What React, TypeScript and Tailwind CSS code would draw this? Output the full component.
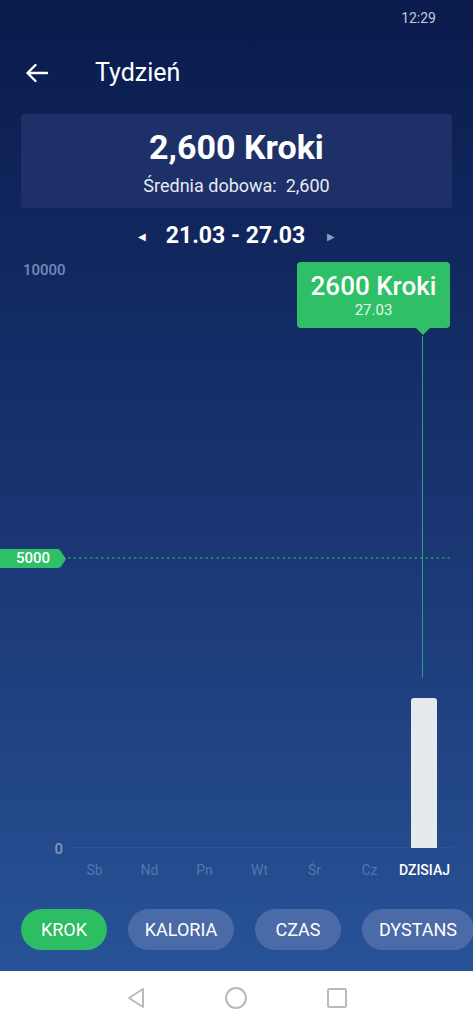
import React from "react";

const days = ["Sb", "Nd", "Pn", "Wt", "Śr", "Cz", "DZISIAJ"];
const values = [0, 0, 0, 0, 0, 0, 2600];
const tabs = ["KALORIA", "CZAS", "DYSTANS"];

const PLOT_H = 578;

export default function App() {
  return (
    <div
      className="flex h-[1024px] w-[473px] flex-col overflow-hidden bg-gradient-to-b from-[#0a1b4d] via-[#193571] to-[#2a569c] text-white"
      style={{ fontFamily: "Roboto, 'Noto Sans', sans-serif" }}
    >
      {/* status bar */}
      <div className="flex h-[36px] items-center justify-end pr-[37px] text-[14px] text-[#c3cadb]">12:29</div>

      {/* header */}
      <div className="flex h-[74px] items-center">
        <svg width="24" height="20" viewBox="0 0 24 20" className="ml-[25px]" fill="none" stroke="white" strokeWidth="2.4" strokeLinecap="round" strokeLinejoin="round">
          <path d="M22 10H2.5M10.5 2L2.5 10l8 8" />
        </svg>
        <span className="ml-[46px] text-[25px]">Tydzień</span>
      </div>

      {/* summary card */}
      <div className="mx-[21px] mt-[4px] flex h-[94px] flex-col items-center justify-center rounded-[4px] bg-[#1d3067] pt-[2px]">
        <p className="text-[34px] leading-[40px] font-bold">2,600 Kroki</p>
        <p className="mt-[8px] text-[18px] leading-[22px] text-[#e6eaf3]">
          Średnia dobowa:&nbsp; 2,600
        </p>
      </div>

      {/* date nav */}
      <div className="flex h-[56px] items-center justify-center">
        <span className="mr-[20px] text-[10px] text-white">◀</span>
        <span className="text-[23px] font-bold">21.03 - 27.03</span>
        <span className="ml-[22px] text-[10px] text-[#8a9ac0]">▶</span>
      </div>

      {/* chart */}
      <div className="relative mt-[6px]" style={{ height: PLOT_H }}>
        <span className="absolute left-[23px] top-0 -translate-y-1/2 text-[15px] font-medium text-[#7589ba]">10000</span>
        <span className="absolute right-[410px] bottom-0 translate-y-[55%] text-[15px] font-medium text-[#8496be]">0</span>
        <div className="absolute bottom-0 left-[70px] right-[20px] h-px bg-white/5" />

        {/* 5000 goal */}
        <div className="absolute left-0 top-[279px] flex h-[19px] items-center">
          <div className="flex h-[19px] w-[60px] items-center justify-end rounded-r-[2px] bg-[#2fbf67] pr-[10px] text-[15px] font-medium">5000</div>
          <div className="h-0 w-0 border-y-[9.5px] border-l-[6px] border-y-transparent border-l-[#2fbf67]" />
        </div>
        <svg className="absolute left-[68px] top-[287px]" width="384" height="2">
          <line x1="0" y1="1" x2="384" y2="1" stroke="#36b879" strokeWidth="1.2" strokeDasharray="2.5 3" />
        </svg>

        {/* bars */}
        <div className="absolute bottom-0 left-[66px] flex h-full w-[385px] items-end">
          {values.map((v, i) => (
            <div key={i} className="flex h-full w-[55px] items-end justify-center">
              {v > 0 && (
                <div className="w-[26px] rounded-t-[3px] bg-[#e6e9ee]" style={{ height: (v / 10000) * PLOT_H }} />
              )}
            </div>
          ))}
        </div>

        {/* selection line + tooltip */}
        <div className="absolute left-[422px] top-[66px] h-[342px] w-px bg-[#2f9c83]" />
        <div className="absolute left-[297px] top-[-8px] flex h-[66px] w-[153px] flex-col items-center justify-center rounded-[4px] bg-[#2fbf67]">
          <span className="text-[26px] leading-[30px] font-medium">2600 Kroki</span>
          <span className="text-[15px] leading-[18px] text-[#e9f7ee]">27.03</span>
          <div className="absolute top-full left-[119px] h-0 w-0 border-x-[7px] border-t-[7px] border-x-transparent border-t-[#2fbf67]" />
        </div>
      </div>

      {/* day labels */}
      <div className="ml-[67px] flex h-[44px] w-[385px] items-center">
        {days.map((d, i) => (
          <span
            key={d}
            className={`w-[55px] text-center text-[14px] ${i === days.length - 1 ? "font-medium text-white" : "text-[#5674ae]"}`}
          >
            {d}
          </span>
        ))}
      </div>

      {/* tabs */}
      <div className="mt-[17px] flex h-[41px] gap-[21px] whitespace-nowrap pl-[21px]">
        <button className="h-full w-[86px] shrink-0 rounded-full bg-[#2dbd62] text-[18px]">KROK</button>
        {tabs.map((t) => (
          <button
            key={t}
            className={`h-full shrink-0 rounded-full bg-[#4b6aa8] text-[18px] ${t === "KALORIA" ? "w-[106px]" : t === "CZAS" ? "w-[86px]" : "w-[112px]"}`}
          >
            {t}
          </button>
        ))}
      </div>

      <div className="flex-1" />

      {/* system nav */}
      <div className="flex h-[53px] items-center justify-center gap-[78px] bg-white">
        <svg width="20" height="22" viewBox="0 0 20 22" fill="none" stroke="#b9b9b9" strokeWidth="2" strokeLinejoin="round">
          <path d="M17 2L3 11l14 9z" />
        </svg>
        <svg width="24" height="24" viewBox="0 0 24 24" fill="none" stroke="#b9b9b9" strokeWidth="2">
          <circle cx="12" cy="12" r="10" />
        </svg>
        <svg width="22" height="22" viewBox="0 0 22 22" fill="none" stroke="#b9b9b9" strokeWidth="2">
          <rect x="2" y="2" width="18" height="18" rx="1.5" />
        </svg>
      </div>
    </div>
  );
}
